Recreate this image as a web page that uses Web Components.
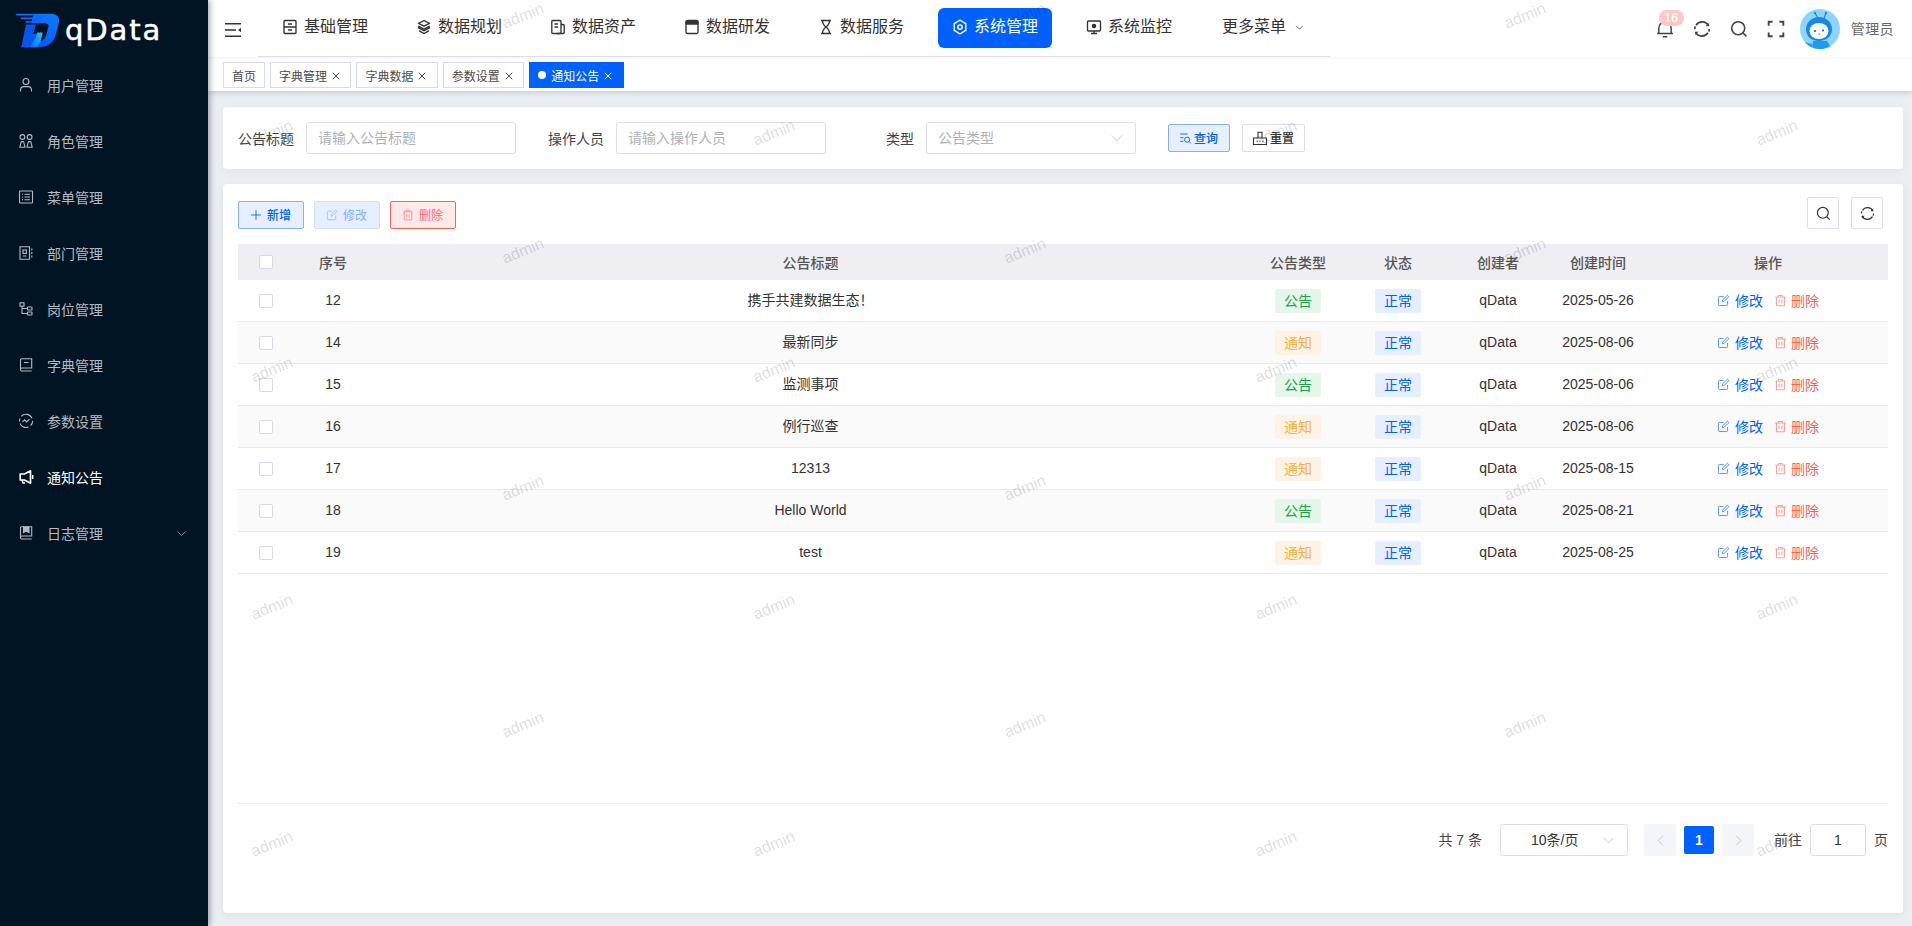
<!DOCTYPE html>
<html lang="zh-CN">
<head>
<meta charset="utf-8">
<title>qData</title>
<style>
html,body{margin:0;padding:0;height:100%;overflow:hidden;background:#ebeef2;font-family:"Liberation Sans","Noto Sans CJK SC",sans-serif;font-size:14px;color:#333}
</style>
</head>
<body>
<q-app>
  <q-sidebar slot="side">
    <q-side-item icon="user">用户管理</q-side-item>
    <q-side-item icon="roles">角色管理</q-side-item>
    <q-side-item icon="menu">菜单管理</q-side-item>
    <q-side-item icon="dept">部门管理</q-side-item>
    <q-side-item icon="post">岗位管理</q-side-item>
    <q-side-item icon="dict">字典管理</q-side-item>
    <q-side-item icon="params">参数设置</q-side-item>
    <q-side-item icon="notice" active>通知公告</q-side-item>
    <q-side-item icon="log" arrow>日志管理</q-side-item>
  </q-sidebar>
  <q-header slot="head">
    <q-nav-item icon="base">基础管理</q-nav-item>
    <q-nav-item icon="layers">数据规划</q-nav-item>
    <q-nav-item icon="asset">数据资产</q-nav-item>
    <q-nav-item icon="dev">数据研发</q-nav-item>
    <q-nav-item icon="hour">数据服务</q-nav-item>
    <q-nav-item icon="hex" active>系统管理</q-nav-item>
    <q-nav-item icon="monitor">系统监控</q-nav-item>
    <q-nav-item more>更多菜单</q-nav-item>
  </q-header>
  <q-tagsbar slot="tags">
    <q-tab plain>首页</q-tab>
    <q-tab>字典管理</q-tab>
    <q-tab>字典数据</q-tab>
    <q-tab>参数设置</q-tab>
    <q-tab active>通知公告</q-tab>
  </q-tagsbar>
  <q-search-card slot="main"></q-search-card>
  <q-table-card slot="main"></q-table-card>
  <q-watermark slot="over"></q-watermark>
</q-app>
<script>
const ICONS={
 user:'<circle cx="8" cy="4.5" r="3"/><path d="M2.5 14.5v-1.2c0-2.2 1.6-3.7 3.4-3.7h4.2c1.8 0 3.4 1.5 3.4 3.7v1.2"/>',
 roles:'<circle cx="4.4" cy="4" r="2.4"/><circle cx="11.6" cy="4" r="2.4"/><path d="M3.2 8.6h2.4l1.4 5.6H1.8z" stroke-linejoin="round"/><path d="M10.4 8.6h2.4l1.4 5.6H9z" stroke-linejoin="round"/>',
 menu:'<rect x="1.5" y="2" width="13" height="12" rx=".8"/><path d="M6.5 5.2h5.5M6.5 8h5.5M6.5 10.8h5.5M4 5.2h1M4 8h1M4 10.8h1"/>',
 dept:'<path d="M2 1.8h9.5v12.4H2z"/><rect x="5" y="5" width="3.4" height="3.4"/><path d="M5 11h3.4M13.8 3.5v2M13.8 7v2M13.8 10.5v2"/>',
 post:'<rect x="2" y="1.8" width="4" height="3.4"/><rect x="9.5" y="6" width="4.5" height="3" rx=".6"/><rect x="9.5" y="11" width="4.5" height="3" rx=".6"/><path d="M4 5.2v7.3h5.5M4 7.5h5.5"/>',
 dict:'<path d="M2.5 12V3a1.2 1.2 0 0 1 1.2-1.2h10V11H4a1.5 1.5 0 0 0-1.5 1.5v0A1.5 1.5 0 0 0 4 14h9.7"/><path d="M6 5.5h4.5"/>',
 params:'<path d="M3.2 3.3A6.5 6.5 0 0 1 14 5.4M14.6 8a6.5 6.5 0 0 1-2 4.7M10.5 14a6.5 6.5 0 0 1-8.6-3.6M1.5 8.4a6.5 6.5 0 0 1 .6-3"/><path d="M4.5 8.8l2.2-2 2 2.2 2.8-2.8"/>',
 notice:'<path d="M12.5 1.8v12.4L6.5 11H2.2V5h4.3z" stroke-width="1.7" stroke-linejoin="round"/><path d="M4 11l1 3h2M14.7 6v4" stroke-width="1.5"/>',
 log:'<path d="M2.5 12.5V3a1.2 1.2 0 0 1 1.2-1.2h10V11H4a1.5 1.5 0 0 0 0 3h9.7"/><path d="M5.5 2h5.5v5.5L8.2 6 5.5 7.5z" fill="currentColor"/>',
 base:'<rect x="2" y="1.5" width="12" height="13" rx="1"/><path d="M2 8h12M6 5h4M6 11h4"/>',
 layers:'<path d="M8 1.5l5.5 2.8L8 7.2 2.5 4.3z" stroke-linejoin="round"/><path d="M2.5 7.2L8 10l5.5-2.8M2.5 7.6v1.2L8 11.7l5.5-2.9V7.6"/><path d="M3 11.6l5 2.9 5-2.9"/>',
 asset:'<rect x="1.8" y="1.5" width="9.2" height="13" rx="1"/><path d="M11 5.5h2.2a1 1 0 0 1 1 1v7a1 1 0 0 1-1 1H7M4.5 5h3.5M4.5 8h3.5"/>',
 dev:'<path d="M4 1.5h8.5a1.5 1.5 0 0 1 1.5 1.5v10a1.5 1.5 0 0 1-1.5 1.5h-9A1.5 1.5 0 0 1 2 13V3a2 2 0 0 1 2-1.5z"/><path d="M2.2 2.5h11.6v2.5H2.2z" fill="currentColor"/>',
 hour:'<path d="M3 1.5h10M3 14.5h10M4.5 1.5c0 3.5 1 4.6 3.5 6.5-2.5 1.9-3.5 3-3.5 6.5M11.5 1.5c0 3.5-1 4.6-3.5 6.5 2.5 1.9 3.5 3 3.5 6.5"/>',
 hex:'<path d="M8 1.2l5.8 3.4v6.8L8 14.8l-5.8-3.4V4.6z" stroke-linejoin="round"/><circle cx="8" cy="8" r="2.2"/>',
 monitor:'<rect x="1.5" y="2" width="13" height="10" rx="1"/><path d="M8 12v2.5M5 14.5h6"/><circle cx="8" cy="7" r="1.6" fill="currentColor"/>',
 refresh:'<path d="M13.8 5.2A6.4 6.4 0 0 0 2.7 4.6M2.2 10.8a6.4 6.4 0 0 0 11.1.6M1.6 8A6.4 6.4 0 0 1 2 5.7M14.4 8a6.4 6.4 0 0 1-.4 2.3"/><path d="M14 2.6v3h-3z" fill="currentColor" stroke="none"/><path d="M2 13.4v-3h3z" fill="currentColor" stroke="none"/>',
 search:'<circle cx="7.3" cy="7.3" r="5.8"/><path d="M11.6 11.6l3 3"/>',
 full:'<path d="M1.5 5V1.5H5M11 1.5h3.5V5M14.5 11v3.5H11M5 14.5H1.5V11" stroke-width="1.7"/>',
 bell:'<path d="M2.5 12V7.2a5.5 5.5 0 0 1 11 0V12M1 12h14M6 14.8h4"/>',
 edit:'<path d="M13 8.5V13a1.2 1.2 0 0 1-1.2 1.2H3A1.2 1.2 0 0 1 1.8 13V4.2A1.2 1.2 0 0 1 3 3h5"/><path d="M6.5 9.5l.4-2.2L12.8 1.5l1.8 1.8-5.8 5.8z" stroke-linejoin="round"/>',
 trash:'<path d="M1.5 3.8h13M5.5 3.5V1.8h5v1.7M3 3.8v10.7h10V3.8M6.3 7v4.5M9.7 7v4.5"/>',
 plus:'<path d="M8 1.5v13M1.5 8h13"/>',
 x:'<path d="M1.5 1.5l13 13M14.5 1.5l-13 13"/>',
 down:'<path d="M2 5l6 6 6-6"/>',
 left:'<path d="M11 2L5 8l6 6"/>',
 right:'<path d="M5 2l6 6-6 6"/>',
 query:'<path d="M1.5 2.5h9M1.5 7h4M1.5 11.5h4"/><circle cx="10" cy="9.5" r="3.2"/><path d="M12.3 11.8l2.2 2.2"/>',
 reset:'<path d="M1.5 8h13v6.5h-13z"/><path d="M6 8V2.2h4V8M4.5 11.2h1.2M7.4 11.2h1.2M10.3 11.2h1.2"/>'
};
const def=(n,c)=>customElements.define(n,c);
class Base extends HTMLElement{
  constructor(){super();this.attachShadow({mode:'open'});}
  render(h){this.shadowRoot.innerHTML=h;}
}
def('q-icon',class extends Base{
  connectedCallback(){
    const s=this.getAttribute('size')||16,w=this.getAttribute('stroke')||1.2;
    this.render(`<style>:host{display:inline-flex;flex:none;width:${s}px;height:${s}px}svg{display:block;width:100%;height:100%}</style>
    <svg viewBox="0 0 16 16" fill="none" stroke="currentColor" stroke-width="${w}">${ICONS[this.getAttribute('name')]||''}</svg>`);
  }
});
def('q-app',class extends Base{
  connectedCallback(){
    this.render(`<style>
    :host{display:grid;grid-template-columns:208px 1fr;height:926px;width:1912px;position:relative;overflow:hidden}
    .side{display:block;position:relative;z-index:5}
    .col{display:flex;flex-direction:column;min-width:0;height:926px}
    .content{display:flex;flex-direction:column;gap:15px;padding:16px 9px 13px 15px;flex:1;min-height:0}
    </style>
    <div class="side"><slot name="side"></slot></div>
    <div class="col"><slot name="head"></slot><slot name="tags"></slot><div class="content"><slot name="main"></slot></div></div>
    <slot name="over"></slot>`);
  }
});
def('q-sidebar',class extends Base{
  connectedCallback(){
    this.render(`<style>
    :host{display:block;height:926px;background:#001424;box-shadow:2px 0 6px rgba(0,21,41,.35)}
    .logo{display:flex;align-items:center;height:58px;padding-left:15px;gap:5px;box-sizing:border-box}
    svg{display:block;width:45px;height:35px;margin-top:2px;flex:none}
    .name{color:#fff;font:500 29px/1 "DejaVu Sans",sans-serif;letter-spacing:1.9px;-webkit-text-stroke:.5px #fff;margin-top:2px}
    </style>
    <div class="logo">
      <svg viewBox="45 38 135 104"><defs>
      <linearGradient id="g" x1="0" y1="1" x2="1" y2="0"><stop offset="0" stop-color="#0a4bf0"/><stop offset=".55" stop-color="#0866ff"/><stop offset="1" stop-color="#0b7dff"/></linearGradient>
      <linearGradient id="c" x1="0" y1="1" x2="1" y2="0"><stop offset="0" stop-color="#0a6dff"/><stop offset="1" stop-color="#1cc6f5"/></linearGradient></defs>
      <path d="M46 40h54v5H50zM60 51h40v5H64zM76 62h20v5H78z" fill="#0a6cff"/>
      <path d="M100 40h50c22 0 31 12 26 30l-8 30c-6 26-24 40-48 40H64l12-46h24l-2 6h18l-8 22h12c8 0 14-6 17-14l8-28c2-8-2-12-12-12H94z" fill="url(#g)"/>
      <path d="M78 72h30l-18 60-6 8H64z" fill="#0757ee"/>
      <path d="M112 96h16l-6 26-12 18H90l14-24h2z" fill="url(#c)"/>
      </svg>
      <span class="name">qData</span>
    </div><slot></slot>`);
  }
});
def('q-side-item',class extends Base{
  connectedCallback(){
    const a=this.hasAttribute('active');
    this.render(`<style>
    :host{display:flex;align-items:center;height:56px;box-sizing:border-box;padding:0 21px 2px 18px;color:${a?'#fff':'#b4bbc1'};font-size:14px}
    q-icon{margin-right:13px}
    q-icon.a{margin:0 0 0 auto;color:#9aa3aa}
    </style><q-icon name="${this.getAttribute('icon')}" size="16" stroke="1.1"></q-icon><slot></slot>${this.hasAttribute('arrow')?'<q-icon class="a" name="down" size="11" stroke="1.2"></q-icon>':''}`);
  }
});
def('q-header',class extends Base{
  connectedCallback(){
    this.render(`<style>
    :host{display:flex;height:57px;background:#fff;flex:none;box-sizing:border-box;box-shadow:0 1px 2px rgba(0,0,0,.05);position:relative;z-index:2}
    .tg{width:50px;padding-left:17px;box-sizing:border-box;padding-top:23px}
    .tg svg{display:block;width:16px;height:14px}
    nav{display:flex;gap:20px;width:1072px;padding:8px 0 0 10px;box-sizing:border-box;border-bottom:1px solid #dcdde6;flex:none}
    .r{margin-left:auto;display:flex;align-items:center;padding-right:18px;color:#444}
    .bell{position:relative;display:flex;margin-right:19px}
    .badge{position:absolute;left:3px;top:-10px;width:25px;height:16px;border-radius:8px;background:#fdc8c8;color:#fff;font-size:12px;line-height:16px;text-align:center}
    .ic{margin-right:19px;display:flex}
    .ic.l{margin-right:15px}
    .av{width:40px;height:40px;border-radius:50%;overflow:hidden;flex:none}
    .av svg{display:block;width:40px;height:40px}
    .nm{margin-left:11px;color:#666;font-size:14px;letter-spacing:.4px;padding-bottom:2px}
    </style>
    <div class="tg"><svg viewBox="0 0 16 14" fill="none" stroke="#333" stroke-width="1.5"><path d="M0 .8h16M0 7h11M0 13.2h16"/><path d="M16 4.8v4.4L13 7z" fill="#333" stroke="none"/></svg></div>
    <nav><slot></slot></nav>
    <div class="r">
      <div class="bell"><q-icon name="bell" size="18" stroke="1.3"></q-icon><span class="badge">16</span></div>
      <div class="ic"><q-icon name="refresh" size="18" stroke="1.5"></q-icon></div>
      <div class="ic"><q-icon name="search" size="18" stroke="1.4"></q-icon></div>
      <div class="ic l"><q-icon name="full" size="18" stroke="1.5"></q-icon></div>
      <div class="av"><svg viewBox="0 0 40 40"><rect width="40" height="40" fill="#8ed4ff"/>
        <path d="M15 4l3 5M26 4l-2 5" stroke="#1689e6" stroke-width="1.2" fill="none"/><circle cx="15" cy="4" r="1.2" fill="#1689e6"/><circle cx="26" cy="4" r="1.2" fill="#1689e6"/>
        <path d="M12 40l1-8h14l5 8z" fill="#1b9cf2"/><path d="M0 32l12 3v5H0z" fill="#1b9cf2"/>
        <path d="M6 20c0-7 6-12 13-12s13 5 13 12c0 7-5 12-13 12S6 27 6 20z" fill="#1689e6"/>
        <ellipse cx="19" cy="22" rx="9.5" ry="8" fill="#fff"/>
        <circle cx="15" cy="22" r="1" fill="#1d4f8a"/><circle cx="23" cy="21.5" r="1" fill="#1d4f8a"/><path d="M18.5 25h1.6" stroke="#1d4f8a" stroke-width=".8"/>
      </svg></div>
      <span class="nm">管理员</span>
    </div>`);
  }
});
def('q-nav-item',class extends Base{
  connectedCallback(){
    const a=this.hasAttribute('active'),m=this.hasAttribute('more');
    this.render(`<style>
    :host{display:flex;align-items:center;height:40px;box-sizing:border-box;padding:0 14px;${m?'padding-left:16px;':''}border-radius:6px;font-size:16px;line-height:1;color:${a?'#fff':'#333'};background:${a?'#0061ff':'transparent'}}
    q-icon{margin-right:6px;margin-top:-2px}
    .t{margin-top:-2px;white-space:nowrap}
    q-icon.ch{margin:-2px 0 0 9px;color:#555}
    </style>${m?'':`<q-icon name="${this.getAttribute('icon')}" size="16" stroke="1.35"></q-icon>`}<span class="t"><slot></slot></span>${m?'<q-icon class="ch" name="down" size="9" stroke="1.5"></q-icon>':''}`);
  }
});
def('q-tagsbar',class extends Base{
  connectedCallback(){
    this.render(`<style>:host{display:flex;gap:5px;height:34px;box-sizing:border-box;padding:5px 0 0 15px;background:#fff;flex:none;box-shadow:0 2px 5px rgba(0,0,0,.14);position:relative;z-index:1}</style><slot></slot>`);
  }
});
def('q-tab',class extends Base{
  connectedCallback(){
    const a=this.hasAttribute('active'),p=this.hasAttribute('plain');
    this.render(`<style>
    :host{display:flex;align-items:center;height:26px;box-sizing:border-box;border:1px solid ${a?'#0061ff':'#d8dce5'};background:${a?'#0061ff':'#fff'};color:${a?'#fff':'#4a4a4a'};font-size:12px;padding:0 ${p?8:10.4}px 0 8px;white-space:nowrap}
    .d{width:8px;height:8px;border-radius:50%;background:#fff;margin-right:5px}
    q-icon{margin:2px 0 0 5px}
    </style>${a?'<span class="d"></span>':''}<slot></slot>${p?'':'<q-icon name="x" size="8" stroke="2"></q-icon>'}`);
  }
});
def('q-field',class extends Base{
  connectedCallback(){
    const sel=this.hasAttribute('select');
    this.render(`<style>
    :host{display:flex;align-items:center}
    label{width:56px;text-align:right;margin-right:12px;color:#444;font-size:14px;white-space:nowrap}
    .i{width:210px;height:32px;box-sizing:border-box;border:1px solid #dcdde6;border-radius:3px;display:flex;align-items:center;padding:0 11px;color:#aeb1b8;font-size:14px;background:#fff}
    .t{padding-bottom:2px}
    q-icon{margin-left:auto;color:#bfc2c9}
    </style><label>${this.getAttribute('label')}</label><div class="i"><span class="t"><slot></slot></span>${sel?'<q-icon name="down" size="14" stroke="1"></q-icon>':''}</div>`);
  }
});
const BTN={
 query:['#e6efff','#80b0ff','#0061ff'],
 reset:['#fff','#dcdde6','#333'],
 add:['#e6efff','#80b0ff','#0061ff'],
 edit:['#e6efff','#cddfff','#80b0ff'],
 del:['#ffe9e9','#ff5c5c','#ff6b6b'],
 tool:['#fff','#dcdde6','#333']
};
def('q-btn',class extends Base{
  connectedCallback(){
    const [bg,b,c]=BTN[this.getAttribute('kind')];
    const k=this.getAttribute('kind'),tool=k==='tool';
    const cfg={query:[13,-1,2,11,11],reset:[16,-2,2,10,11],add:[12,-1,5,12,12],edit:[12,-1,5,12,12],del:[12,-1,5,12,12]}[k]||[15,0,0,0,0];
    const [sz,ml,mr,pr,pl]=cfg;
    this.render(`<style>
    :host{display:inline-flex;align-items:center;justify-content:center;box-sizing:border-box;height:${tool?32:28}px;${tool?'width:32px;':''}padding:0 ${pr}px ${tool?0:2}px ${pl}px;border:1px solid ${b};border-radius:2px;background:${bg};color:${c};font-size:12px;font-weight:${k==='edit'||k==='del'?400:500};white-space:nowrap;flex:none}
    q-icon{margin:${tool?0:2}px ${mr}px 0 ${ml}px;${k==='edit'||k==='del'?'opacity:.8':''}}
    </style><q-icon name="${this.getAttribute('icon')}" size="${sz}" stroke="${tool?1.25:1.1}"></q-icon><slot></slot>`);
  }
});
def('q-search-card',class extends Base{
  connectedCallback(){
    this.render(`<style>
    :host{display:flex;align-items:center;height:62px;flex:none;box-sizing:border-box;padding-left:15px;gap:32px;background:#fff;border-radius:4px;box-shadow:0 2px 10px rgba(0,0,0,.05)}
    .b{display:flex;gap:12px}
    </style>
    <q-field label="公告标题">请输入公告标题</q-field>
    <q-field label="操作人员">请输入操作人员</q-field>
    <q-field label="类型" select>公告类型</q-field>
    <div class="b"><q-btn kind="query" icon="query">查询</q-btn><q-btn kind="reset" icon="reset">重置</q-btn></div>`);
  }
});
def('q-pill',class extends Base{
  connectedCallback(){
    const C={green:['#e5f6ea','#16a34a'],orange:['#fdf3e5','#f5b041'],blue:['#e6efff','#0061ff']}[this.getAttribute('c')];
    this.render(`<style>:host{display:inline-flex;align-items:center;justify-content:center;box-sizing:border-box;padding-bottom:2px;width:46px;height:24px;border-radius:2px;background:${C[0]};color:${C[1]};font-size:14px}</style><slot></slot>`);
  }
});
def('q-check',class extends Base{
  connectedCallback(){
    this.render(`<style>:host{display:block;width:14px;height:14px;box-sizing:border-box;border:1px solid #d8d9e2;border-radius:2px;background:#fff}</style>`);
  }
});
const GRID='display:grid;grid-template-columns:55px 80px 1fr 100px 100px 100px 100px 240px;align-items:center;justify-items:center;';
def('q-row',class extends Base{
  connectedCallback(){
    const [id,title,type,date]=JSON.parse(this.getAttribute('d'));
    const even=this.hasAttribute('even'),cjk=/[^\x00-\x7f]/.test(title);
    this.render(`<style>
    :host{${GRID}height:42px;box-sizing:border-box;border-bottom:1px solid #e8e8f0;background:${even?'#fafafa':'#fff'};color:#333;font-size:14px}
    .ops{display:flex;align-items:center;margin-top:-2px}
    .e{color:#0061ff;display:flex;align-items:center}
    .d{color:#ff5c5c;display:flex;align-items:center;margin-left:11px}
    q-icon{margin-top:2px;opacity:.7}
    .e q-icon{margin-right:5px}
    .d q-icon{margin-right:4px}
    span{margin-top:-2px}
    span.c{margin-top:-4px}
    </style>
    <q-check></q-check><span>${id}</span><span class="${cjk?'c':''}">${title}</span>
    <q-pill c="${type==='公告'?'green':'orange'}">${type}</q-pill><q-pill c="blue">正常</q-pill>
    <span>qData</span><span>${date}</span>
    <div class="ops"><div class="e"><q-icon name="edit" size="13" stroke="1.15"></q-icon>修改</div><div class="d"><q-icon name="trash" size="13" stroke="1.05"></q-icon>删除</div></div>`);
  }
});
def('q-pagination',class extends Base{
  connectedCallback(){
    this.render(`<style>
    :host{display:flex;align-items:center;justify-content:flex-end;height:32px;font-size:14px;color:#444}
    span{padding-bottom:2px}
    .sel{width:128px;height:32px;box-sizing:border-box;border:1px solid #dcdde6;border-radius:3px;margin-left:18px;display:flex;align-items:center;padding:0 12px 0 30px;color:#333}
    .sel q-icon{margin-left:auto;color:#bfc2c9}
    .nb{width:32px;height:32px;background:#f3f5f8;border-radius:2px;display:flex;align-items:center;justify-content:center;color:#b8bcc4}
    .pg{width:30px;height:28px;background:#0061ff;color:#fff;border-radius:2px;font-weight:700;display:flex;align-items:center;justify-content:center;margin:0 8px}
    .ip{width:56px;height:32px;box-sizing:border-box;border:1px solid #dcdde6;border-radius:3px;margin:0 8px 0 8px;display:flex;align-items:center;justify-content:center;color:#333}
    </style>
    <span>共 7 条</span>
    <div class="sel"><span>10条/页</span><q-icon name="down" size="13" stroke="1"></q-icon></div>
    <div class="nb" style="margin-left:16px"><q-icon name="left" size="13" stroke="1"></q-icon></div>
    <div class="pg">1</div>
    <div class="nb"><q-icon name="right" size="13" stroke="1"></q-icon></div>
    <span style="margin-left:20px">前往</span><div class="ip">1</div><span>页</span>`);
  }
});
def('q-table-card',class extends Base{
  connectedCallback(){
    const rows=[[12,'携手共建数据生态！','公告','2025-05-26'],[14,'最新同步','通知','2025-08-06'],[15,'监测事项','公告','2025-08-06'],[16,'例行巡查','通知','2025-08-06'],[17,'12313','通知','2025-08-15'],[18,'Hello World','公告','2025-08-21'],[19,'test','通知','2025-08-25']];
    this.render(`<style>
    :host{display:flex;flex-direction:column;flex:1;min-height:0;box-sizing:border-box;padding:13px 15px 0;background:#fff;border-radius:4px;box-shadow:0 2px 10px rgba(0,0,0,.06)}
    .bar{display:flex;align-items:flex-end;gap:10px;height:32px;margin-bottom:15px;padding-right:5px;flex:none}
    .sp{flex:1}
    .bar q-btn[kind=tool]+q-btn[kind=tool]{margin-left:2px}
    .tb{flex:1;min-height:0}
    .th{${GRID}height:36px;background:#eeeef3;color:#555;font-size:14px;font-weight:500}
    .th span{margin-top:-1px}
    .ft{height:110px;box-sizing:border-box;border-top:1px solid #e8e8f0;padding-top:20px;flex:none}
    </style>
    <div class="bar"><q-btn kind="add" icon="plus">新增</q-btn><q-btn kind="edit" icon="edit">修改</q-btn><q-btn kind="del" icon="trash">删除</q-btn><div class="sp"></div><q-btn kind="tool" icon="search"></q-btn><q-btn kind="tool" icon="refresh"></q-btn></div>
    <div class="tb"><div class="th"><q-check></q-check><span>序号</span><span>公告标题</span><span>公告类型</span><span>状态</span><span>创建者</span><span>创建时间</span><span>操作</span></div>
    ${rows.map((r,i)=>`<q-row ${i%2?'even':''} d='${JSON.stringify(r)}'></q-row>`).join('')}</div>
    <div class="ft"><q-pagination></q-pagination></div>`);
  }
});
def('q-watermark',class extends Base{
  connectedCallback(){
    let h='';
    for(const y of [16,251,488,725])for(const x of [523,1025,1525])h+=`<i style="left:${x}px;top:${y}px">admin</i>`;
    for(const y of [133,370,607,844])for(const x of [272,774,1276,1777])h+=`<i style="left:${x}px;top:${y}px">admin</i>`;
    this.render(`<style>
    :host{position:absolute;inset:0;pointer-events:none;z-index:3;overflow:hidden}
    i{position:absolute;font:normal 16px/1 "Liberation Sans",sans-serif;color:rgba(0,0,0,.15);transform:translate(-50%,-50%) rotate(-22deg)}
    </style>${h}`);
  }
});
</script>
</body>
</html>
